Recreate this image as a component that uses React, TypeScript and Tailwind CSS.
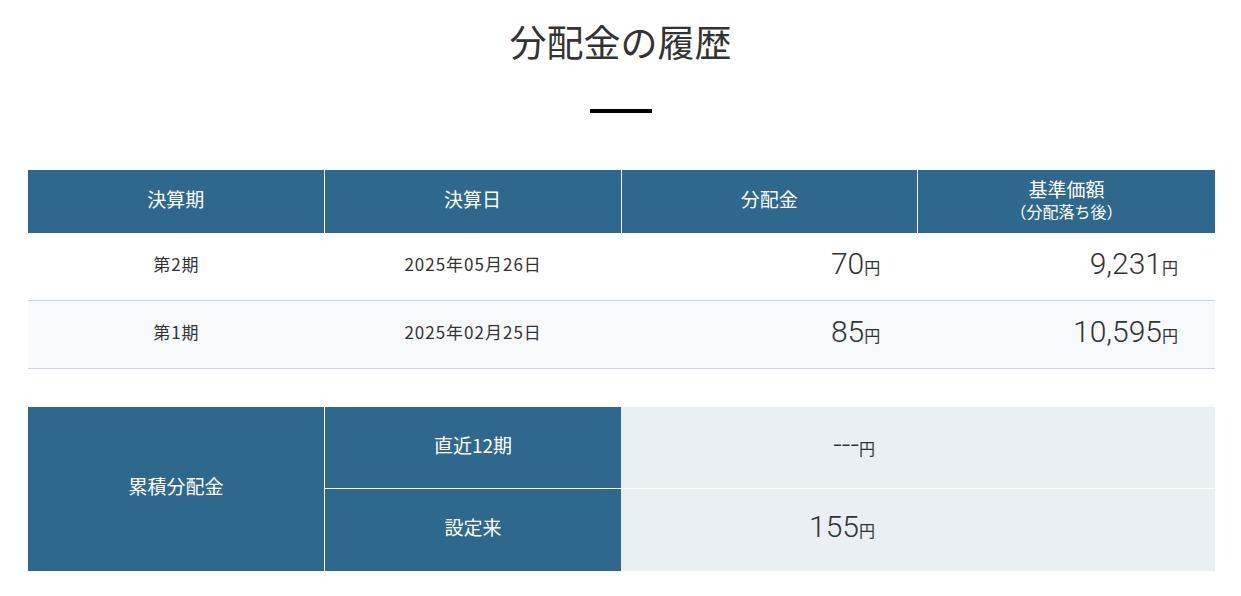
import React from "react";

const jp = { fontFamily: '"Noto Sans CJK JP", "Noto Sans", sans-serif' };

function Num({ v }: { v: string }) {
  return (
    <span className="inline-flex items-baseline">
      <span className="text-[30px] font-light leading-none" style={{ fontFamily: 'Roboto, "Noto Sans CJK JP", sans-serif' }}>{v}</span>
      <span className="text-[16px] leading-none" style={jp}>円</span>
    </span>
  );
}

export default function App() {
  const rows = [
    { p: "第2期", d: "2025年05月26日", a: "70", n: "9,231", bg: "bg-white" },
    { p: "第1期", d: "2025年02月25日", a: "85", n: "10,595", bg: "bg-[#f7f9fb]" },
  ];
  return (
    <div className="w-[1241px] min-h-[596px] bg-white text-[#333]" style={jp}>
      <div className="flex flex-col items-center pt-[23px]">
        <h1 className="text-[37px] leading-[37px] font-normal text-[#333]">分配金の履歴</h1>
        <div className="mt-[49px] h-[4px] w-[62px] bg-black" />
      </div>

      <div className="ml-[28px] mt-[57px] w-[1187px]">
        <div className="grid grid-cols-4 h-[63px] bg-[#2f688d] text-white">
          <div className="flex items-center justify-center pb-[5px] text-[19px] border-r border-white">決算期</div>
          <div className="flex items-center justify-center pb-[5px] text-[19px] border-r border-white">決算日</div>
          <div className="flex items-center justify-center pb-[5px] text-[19px] border-r border-white">分配金</div>
          <div className="flex flex-col items-center justify-center pb-[3px]">
            <span className="text-[19px] leading-[22px]">基準価額</span>
            <span className="text-[16px] leading-[22px]">（分配落ち後）</span>
          </div>
        </div>
        {rows.map((r) => (
          <div key={r.p} className={`grid grid-cols-4 h-[68px] border-b border-[#c8d4de] ${r.bg}`}>
            <div className="flex items-center justify-center pb-[5px] text-[17px] tracking-[1px]">{r.p}</div>
            <div className="flex items-center justify-center pb-[5px] text-[17px] tracking-[1px]">{r.d}</div>
            <div className="flex items-center justify-end pb-[5px] pr-[38px]"><Num v={r.a} /></div>
            <div className="flex items-center justify-end pb-[5px] pr-[37px]"><Num v={r.n} /></div>
          </div>
        ))}

        <div className="mt-[38px] flex h-[164px]">
          <div className="flex w-[297px] items-center justify-center pb-[5px] border-r border-white bg-[#2f688d] text-[19px] text-white">
            累積分配金
          </div>
          <div className="flex flex-1 flex-col">
            <div className="flex h-[82px] border-b border-white">
              <div className="flex w-[296px] items-center justify-center pb-[5px] bg-[#2f688d] text-[19px] text-white">直近12期</div>
              <div className="flex flex-1 bg-[#e9eff3]">
                <div className="flex w-[297px] items-center justify-end pb-[6px] pr-[43px]"><Num v="---" /></div>
              </div>
            </div>
            <div className="flex flex-1">
              <div className="flex w-[296px] items-center justify-center pb-[5px] bg-[#2f688d] text-[19px] text-white">設定来</div>
              <div className="flex flex-1 bg-[#e9eff3]">
                <div className="flex w-[297px] items-center justify-end pb-[6px] pr-[43px]"><Num v="155" /></div>
              </div>
            </div>
          </div>
        </div>
      </div>
    </div>
  );
}
